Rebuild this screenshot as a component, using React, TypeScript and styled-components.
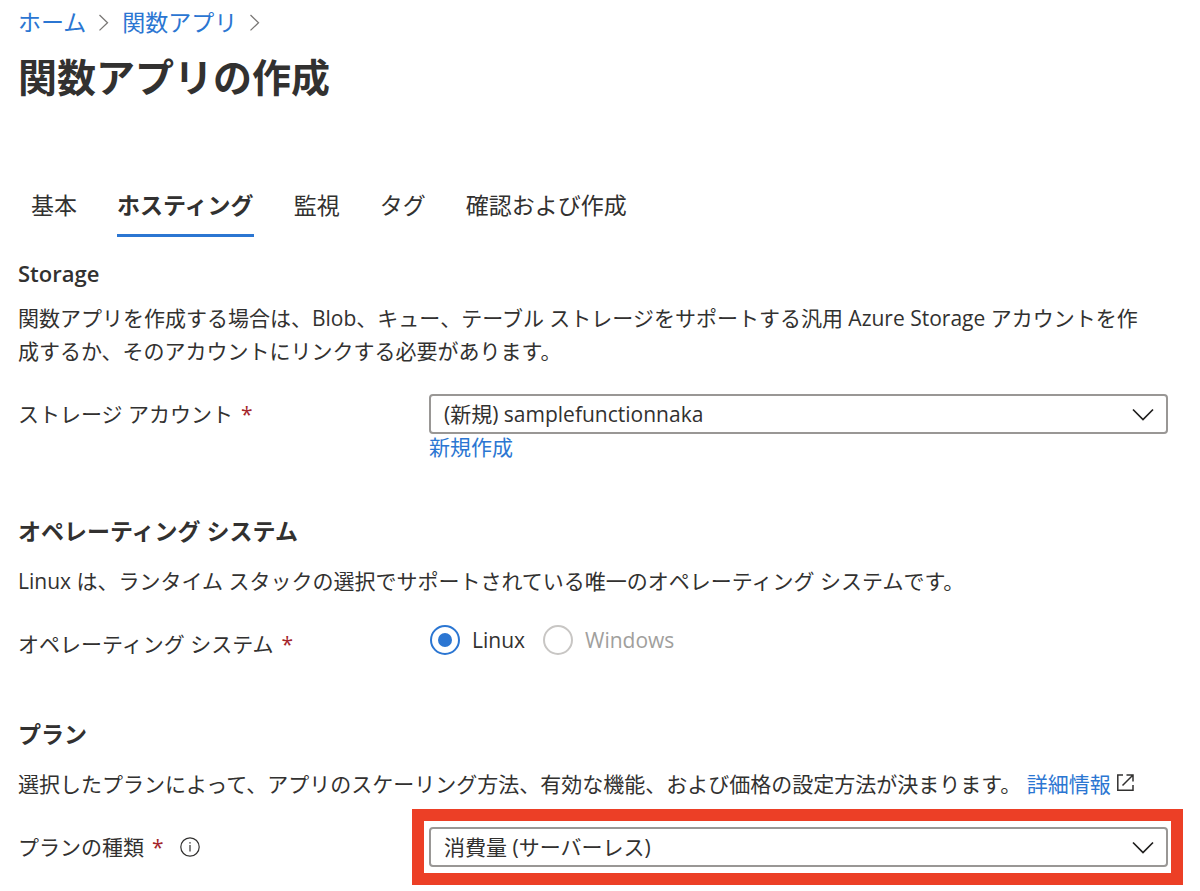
import React from "react";
import styled, { createGlobalStyle } from "styled-components";

const ink = "#323130";
const blue = "#2b76d2";

const GlobalStyle = createGlobalStyle`
  *, *::before, *::after { box-sizing: border-box; }
  body {
    margin: 0;
    background: #fff;
    color: ${ink};
    font-family: "Open Sans", "Noto Sans CJK JP", sans-serif;
    font-size: 21px;
    line-height: 33px;
  }
`;

const Page = styled.main`
  padding: 5px 32px 24px 18px;
`;

const Breadcrumb = styled.nav`
  display: flex;
  align-items: center;
  gap: 12px;
  font-size: 23px;
  line-height: 34px;
`;

const Link = styled.a`
  color: ${blue};
  text-decoration: none;
  &:hover { text-decoration: underline; }
`;

const Title = styled.h1`
  margin: 8px 0 0;
  font-size: 39px;
  line-height: 60px;
  font-weight: 700;
`;

const TabList = styled.div`
  display: flex;
  gap: 40px;
  margin-top: 81px;
  padding-left: 13px;
`;

const Tab = styled.button<{ $active?: boolean }>`
  padding: 0 0 12px;
  border: 0;
  border-bottom: 3px solid ${(p) => (p.$active ? blue : "transparent")};
  background: none;
  color: inherit;
  font-family: inherit;
  font-size: 23px;
  line-height: 34px;
  font-weight: ${(p) => (p.$active ? 700 : 400)};
  white-space: nowrap;
  cursor: pointer;
`;

const Section = styled.section<{ $first?: boolean }>`
  margin-top: ${(p) => (p.$first ? 20 : 54)}px;
`;

const Heading = styled.h2<{ $tight?: boolean }>`
  margin: 0 0 ${(p) => (p.$tight ? 12 : 17)}px;
  font-size: ${(p) => (p.$tight ? 22 : 23)}px;
  line-height: 33px;
  font-weight: 600;
`;

const Text = styled.p`
  margin: 0;
  padding-right: 20px;
`;

const Row = styled.div`
  display: grid;
  grid-template-columns: 411px minmax(0, 1fr);
  margin-top: 26px;
`;

const Label = styled.label`
  display: flex;
  align-items: center;
  gap: 8px;
  height: 40px;
`;

const Required = styled.span`
  color: #a4262c;
`;

const InfoButton = styled.button`
  display: flex;
  margin-left: 8px;
  padding: 0;
  border: 0;
  background: none;
  color: ${ink};
`;

const SelectWrap = styled.div<{ $highlight?: boolean }>`
  position: relative;
  height: 40px;

  ${(p) =>
    p.$highlight &&
    `&::after {
      content: "";
      position: absolute;
      inset: -18px -15px -18px -17px;
      border: 12px solid #ec3f26;
      pointer-events: none;
    }`}

  > svg {
    position: absolute;
    right: 14px;
    top: 14px;
    pointer-events: none;
  }
`;

const Select = styled.select`
  width: 100%;
  height: 40px;
  padding: 0 44px 0 13px;
  border: 2px solid #999795;
  border-radius: 4px;
  appearance: none;
  background: #fff;
  color: inherit;
  font: inherit;
`;

const FieldLink = styled(Link)`
  display: block;
  width: fit-content;
  line-height: 27px;
`;

const RadioGroup = styled.div`
  display: flex;
  align-items: center;
  gap: 17px;
  height: 32px;
`;

const RadioLabel = styled.label<{ $disabled?: boolean }>`
  display: flex;
  align-items: center;
  gap: 12px;
  color: ${(p) => (p.$disabled ? "#a19f9d" : "inherit")};
`;

const Radio = styled.input`
  appearance: none;
  display: grid;
  place-items: center;
  width: 30px;
  height: 30px;
  margin: 0 0 0 1px;
  border: 2px solid ${blue};
  border-radius: 50%;
  background: #fff;

  &:checked::before {
    content: "";
    width: 14px;
    height: 14px;
    border-radius: 50%;
    background: ${blue};
  }
  &:disabled { border-color: #c8c6c4; }
`;

const Crumb = () => (
  <svg width="12" height="18" viewBox="0 0 12 18" fill="none" stroke="#797775" strokeWidth="1.3" aria-hidden="true">
    <path d="M1.5 2l8 7.7L1.5 17.4" />
  </svg>
);

const Chevron = () => (
  <svg width="22" height="14" viewBox="0 0 22 14" fill="none" stroke="#201f1e" strokeWidth="1.7" aria-hidden="true">
    <path d="M1 1.5l10 10 10-10" />
  </svg>
);

const InfoIcon = () => (
  <svg width="20" height="20" viewBox="0 0 20 20" fill="none" stroke="currentColor" aria-hidden="true">
    <circle cx="10" cy="10" r="9.2" strokeWidth="1.2" />
    <path d="M10 8v6.5" strokeWidth="1.2" />
    <path d="M10 5.2v1.4" strokeWidth="1.4" />
  </svg>
);

const ExternalIcon = () => (
  <svg width="18" height="18" viewBox="0 0 18 18" fill="none" stroke={ink} strokeWidth="1.5" aria-hidden="true">
    <path d="M7 1H1.8v15.2h15.2V11M10.5 1h6.5v6.5M17 1L6.5 11.5" />
  </svg>
);

export default function App() {
  return (
    <Page lang="ja">
      <GlobalStyle />
      <Breadcrumb aria-label="階層">
        <Link href="#home">ホーム</Link>
        <Crumb />
        <Link href="#apps">関数アプリ</Link>
        <Crumb />
      </Breadcrumb>
      <Title>関数アプリの作成</Title>

      <TabList role="tablist">
        <Tab role="tab">基本</Tab>
        <Tab role="tab" aria-selected="true" $active>ホスティング</Tab>
        <Tab role="tab">監視</Tab>
        <Tab role="tab">タグ</Tab>
        <Tab role="tab">確認および作成</Tab>
      </TabList>

      <Section $first>
        <Heading $tight>Storage</Heading>
        <Text>
          関数アプリを作成する場合は、Blob、キュー、テーブル ストレージをサポートする汎用 Azure Storage アカウントを作成するか、そのアカウントにリンクする必要があります。
        </Text>
        <Row>
          <Label htmlFor="storage">
            ストレージ アカウント <Required>*</Required>
          </Label>
          <div>
            <SelectWrap>
              <Select id="storage">
                <option>(新規) samplefunctionnaka</option>
              </Select>
              <Chevron />
            </SelectWrap>
            <FieldLink href="#new">新規作成</FieldLink>
          </div>
        </Row>
      </Section>

      <Section>
        <Heading>オペレーティング システム</Heading>
        <Text>Linux は、ランタイム スタックの選択でサポートされている唯一のオペレーティング システムです。</Text>
        <Row>
          <Label as="span" id="os-label">
            オペレーティング システム <Required>*</Required>
          </Label>
          <RadioGroup role="radiogroup" aria-labelledby="os-label">
            <RadioLabel>
              <Radio type="radio" name="os" defaultChecked />
              Linux
            </RadioLabel>
            <RadioLabel $disabled>
              <Radio type="radio" name="os" disabled />
              Windows
            </RadioLabel>
          </RadioGroup>
        </Row>
      </Section>

      <Section>
        <Heading>プラン</Heading>
        <Text>
          選択したプランによって、アプリのスケーリング方法、有効な機能、および価格の設定方法が決まります。{" "}
          <Link href="#details">
            詳細情報 <ExternalIcon />
          </Link>
        </Text>
        <Row>
          <Label htmlFor="plan">
            プランの種類 <Required>*</Required>
            <InfoButton type="button" aria-label="プランの種類の情報">
              <InfoIcon />
            </InfoButton>
          </Label>
          <SelectWrap $highlight>
            <Select id="plan">
              <option>消費量 (サーバーレス)</option>
            </Select>
            <Chevron />
          </SelectWrap>
        </Row>
      </Section>
    </Page>
  );
}
